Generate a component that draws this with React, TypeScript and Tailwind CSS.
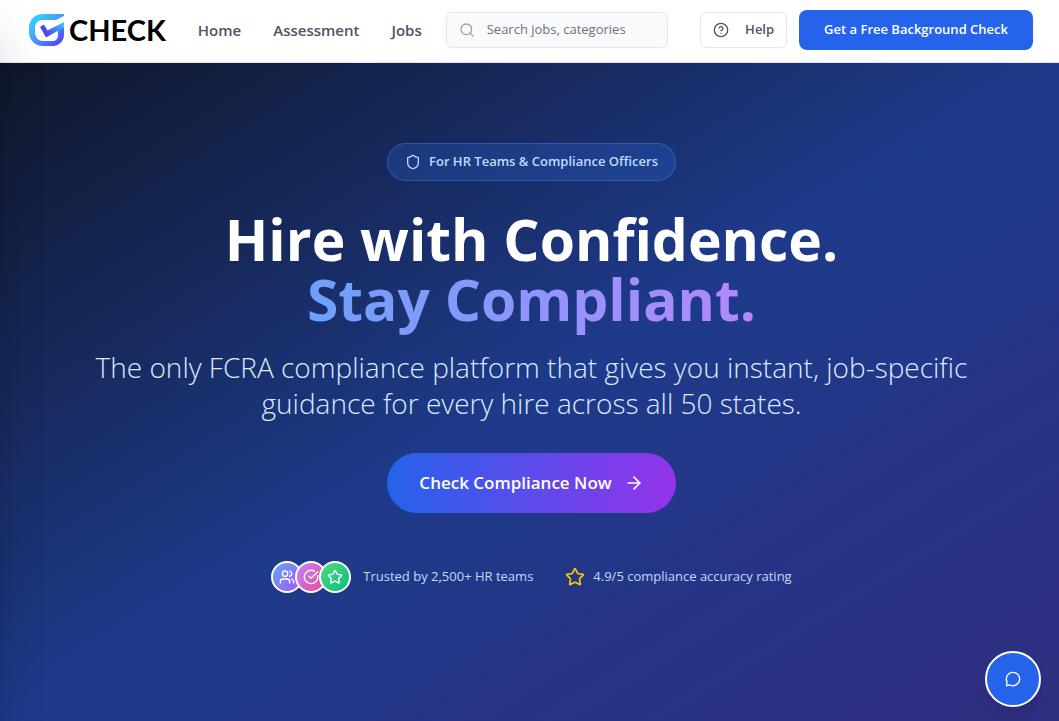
import { ArrowRight, CircleCheckBig, CircleQuestionMark, MessageCircle, Search, Shield, Star, Users } from "lucide-react";

const navLinks = ["Home", "Assessment", "Jobs"];

const avatars = [
  { icon: Users, color: "from-[#60a5fa] to-[#a855f7]" },
  { icon: CircleCheckBig, color: "from-[#c084fc] to-[#ec4899]" },
  { icon: Star, color: "from-[#4ade80] to-[#10b981]" },
];

function Logo() {
  return (
    <a href="#" className="flex items-center gap-1 text-black">
      <svg viewBox="0 0 36 32" className="h-8 w-9" aria-hidden="true">
        <defs>
          <linearGradient id="logo-box" x1="0" y1="0" x2="1" y2="1">
            <stop offset="0.2" stopColor="#38c6ff" />
            <stop offset="0.5" stopColor="#4799ff" />
            <stop offset="0.85" stopColor="#5350fc" />
          </linearGradient>
          <linearGradient id="logo-tick" x1="1" y1="0" x2="0" y2="0.4">
            <stop offset="0.1" stopColor="#3cc0ff" />
            <stop offset="0.85" stopColor="#4d48f2" />
          </linearGradient>
        </defs>
        <path
          d="M35 0H14C6 0 0 6 0 14v4c0 8 6 14 14 14h10c6 0 11-5 11-11V12l-6 3v6c0 3.500-2 6-5 6H14c-5 0-8-4-8-9v-4c0-5 3-8 8-8h13l8-4z"
          fill="url(#logo-box)"
        />
        <path d="M35 8v5.500L17 23.500 11 13l4-2.500 3.500 6z" fill="url(#logo-tick)" />
      </svg>
      <span className="font-['Lato',sans-serif] text-[29px] leading-8 font-bold">CHECK</span>
    </a>
  );
}

function Header() {
  return (
    <header className="flex h-[63px] items-center border-b border-gray-200 bg-white pr-[26px] pb-0.5 pl-[29px]">
      <Logo />
      <nav className="ml-8 flex gap-8">
        {navLinks.map((link) => (
          <a key={link} href="#" className="text-[15px] font-semibold text-gray-600">
            {link}
          </a>
        ))}
      </nav>
      <label className="ml-6 flex h-9 min-w-0 flex-1 items-center gap-3 rounded-md border border-gray-200 bg-gray-50 pr-10 pl-3">
        <Search className="size-4 shrink-0 text-gray-400" />
        <input
          type="text"
          aria-label="Search jobs"
          placeholder="Search jobs, categories"
          className="w-full min-w-0 text-[13px] outline-none placeholder:text-gray-500"
        />
      </label>
      <button className="ml-8 flex h-9 items-center gap-4 rounded-md border border-gray-200 bg-white px-3 text-[13px] font-semibold text-gray-600">
        <CircleQuestionMark className="size-4" />
        Help
      </button>
      <button className="ml-3 h-10 rounded-lg bg-[#2563eb] px-[25px] text-[13px] font-semibold whitespace-nowrap text-white">
        Get a Free Background Check
      </button>
    </header>
  );
}

function Hero() {
  return (
    <main className="flex flex-1 flex-col items-center bg-linear-to-br/srgb from-[#0f172a] via-[#1e3a8a] to-[#312e81] pt-20 pr-16 pl-17 text-center">
      <div className="flex h-[38px] items-center gap-2 rounded-full border border-blue-400/30 bg-blue-500/20 px-[17px] text-[13px] font-semibold text-blue-200">
        <Shield className="size-4" />
        For HR Teams &amp; Compliance Officers
      </div>
      <h1 className="mt-7 text-[57px] leading-[60px] font-bold text-white">
        Hire with Confidence.
        <span className="block bg-linear-to-r/srgb from-[#60a5fa] to-[#c084fc] bg-clip-text pb-3 text-transparent">
          Stay Compliant.
        </span>
      </h1>
      <p className="mt-2 max-w-4xl text-[28px] leading-9 font-light text-blue-100">
        The only FCRA compliance platform that gives you instant, job-specific guidance for every hire across all 50 states.
      </p>
      <button className="mt-8 flex h-[60px] items-center gap-3 rounded-full bg-linear-to-r/srgb from-[#2563eb] to-[#9333ea] px-8 text-[17px] font-semibold text-white">
        Check Compliance Now
        <ArrowRight className="size-5" />
      </button>
      <div className="mt-12 flex items-center gap-8 text-[13px] text-blue-200">
        <div className="flex items-center gap-3">
          <div className="flex -space-x-2">
            {avatars.map(({ icon: Icon, color }) => (
              <span
                key={color}
                className={`flex size-8 items-center justify-center rounded-full border-2 border-white bg-linear-to-br/srgb text-white ${color}`}
              >
                <Icon className="size-4" />
              </span>
            ))}
          </div>
          Trusted by 2,500+ HR teams
        </div>
        <div className="flex items-center gap-2">
          <Star className="size-5 text-yellow-400" />
          4.9/5 compliance accuracy rating
        </div>
      </div>
    </main>
  );
}

export default function App() {
  return (
    <div className="flex min-h-screen flex-col font-['Open_Sans','Noto_Sans',sans-serif]">
      <Header />
      <Hero />
      <div className="pointer-events-none fixed inset-y-0 right-full w-64 bg-white shadow-2xl" />
      <button
        aria-label="Open chat"
        className="fixed right-[18px] bottom-[14px] flex size-14 items-center justify-center rounded-full border-2 border-white bg-[#2563eb] text-white shadow-lg"
      >
        <MessageCircle className="size-4" />
      </button>
    </div>
  );
}
